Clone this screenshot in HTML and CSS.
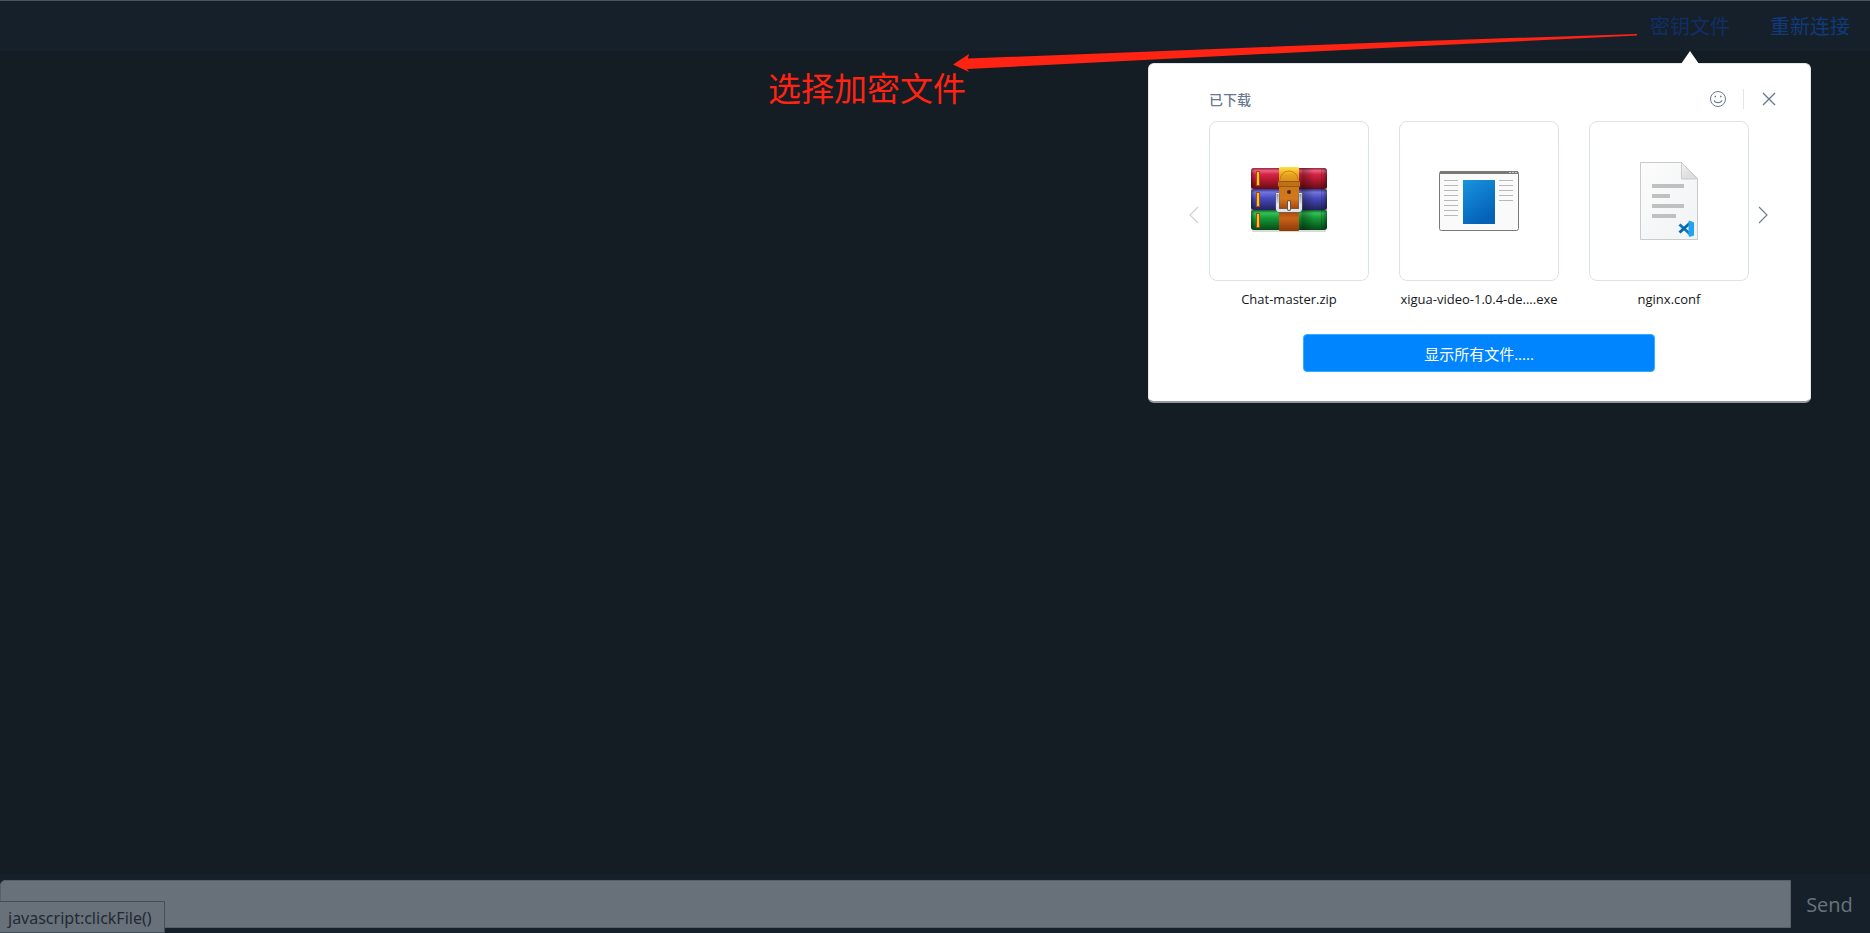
FILE: index.html
```html
<!DOCTYPE html>
<html lang="zh-CN">
<head>
<meta charset="utf-8">
<title>Chat</title>
<link rel="stylesheet" href="styles.css">
</head>
<body>
<header class="topbar">
  <nav class="links">
    <div class="menu">
      <a class="link key" href="#files">密钥文件</a>
      <section class="popup" id="files">
        <div class="popup-head">
          <h2 class="popup-title">已下载</h2>
          <div class="tools">
            <button class="icon-btn" type="button" aria-label="反馈">
              <svg width="18" height="18" viewBox="0 0 18 18" fill="none" stroke="#68798e"><circle cx="9" cy="9" r="7.500"/><path d="M5.200 10.300a3.900 3 0 0 0 7.600 0" stroke-width="1.200"/><path d="M5.500 6.500h1.500M11 6.500h1.500" stroke-width="1.500"/></svg>
            </button>
            <span class="divider"></span>
            <button class="icon-btn" type="button" aria-label="关闭">
              <svg width="18" height="18" viewBox="0 0 18 18" fill="none" stroke="#68798e" stroke-width="1.400"><path d="M3 3l12 12M15 3L3 15"/></svg>
            </button>
          </div>
        </div>
        <div class="carousel">
          <button class="arrow prev" type="button" aria-label="上一页" disabled>
            <svg width="10" height="18" viewBox="0 0 10 18" fill="none" stroke="#cbd0d5" stroke-width="1.100"><path d="M9 1L1 9l8 8"/></svg>
          </button>
          <ul class="files">
            <li class="file">
              <div class="thumb">
                <svg width="78" height="70" viewBox="0 1 78 70">
                  <defs>
                    <linearGradient id="red" x2="0" y2="1"><stop offset="0" stop-color="#9f2037"/><stop offset=".13" stop-color="#e46483"/><stop offset=".3" stop-color="#d82444"/><stop offset=".65" stop-color="#a51629"/><stop offset="1" stop-color="#650c17"/></linearGradient>
                    <linearGradient id="blue" x2="0" y2="1"><stop offset="0" stop-color="#303184"/><stop offset=".15" stop-color="#7375df"/><stop offset=".45" stop-color="#4649bb"/><stop offset="1" stop-color="#23235f"/></linearGradient>
                    <linearGradient id="green" x2="0" y2="1"><stop offset="0" stop-color="#096422"/><stop offset=".15" stop-color="#38bf5b"/><stop offset=".4" stop-color="#149b36"/><stop offset="1" stop-color="#08491a"/></linearGradient>
                    <linearGradient id="strap" x2="0" y2="1"><stop offset="0" stop-color="#ffe343"/><stop offset=".12" stop-color="#e8a420"/><stop offset=".32" stop-color="#c87818"/><stop offset=".5" stop-color="#d4771a"/><stop offset=".67" stop-color="#9c4110"/><stop offset=".8" stop-color="#c96316"/><stop offset="1" stop-color="#8c390c"/></linearGradient>
                    <linearGradient id="buckle" x2="0" y2="1"><stop stop-color="#8292a4"/><stop offset=".6" stop-color="#bdc6d0"/><stop offset="1" stop-color="#f4f7fa"/></linearGradient>
                    <linearGradient id="edge"><stop stop-color="#000" stop-opacity=".4"/><stop offset=".05" stop-opacity="0"/><stop offset=".62" stop-opacity="0"/><stop offset=".68" stop-opacity=".3"/><stop offset=".83" stop-opacity="0"/><stop offset=".93" stop-opacity="0"/><stop offset="1" stop-opacity=".4"/></linearGradient>
                  </defs>
                  <rect x="2" y="65" width="74" height="2" rx="1" fill="#1f3b1d" opacity=".18"/>
                  <rect x="1" y="3" width="76" height="21" rx="3" fill="url(#red)"/>
                  <rect x="1" y="24" width="76" height="21" rx="3" fill="url(#blue)"/>
                  <rect x="1" y="45" width="76" height="20" rx="3" fill="url(#green)"/>
                  <rect x="1" y="3" width="76" height="62" rx="3" fill="url(#edge)"/>
                  <path d="M8 6v15M8 27v15M8 48v15" stroke="#a34a10" stroke-width="4"/>
                  <path d="M8 7v13M8 28v13M8 49v13" stroke="#f3c32a" stroke-width="2"/>
                  <path d="M71.500 4v60" stroke="#000" opacity=".2"/>
                  <rect x="29" y="2" width="20" height="64" rx="1" fill="url(#strap)"/>
                  <path d="M30 15a9 9 0 0 1 18 0" fill="none" stroke="#b87517" opacity=".8"/>
                  <rect x="28" y="16" width="22" height="6" rx="1" fill="#c07019"/>
                  <path d="M28 16.500h22M28 21.500h22" stroke="#92500f" opacity=".8"/>
                  <circle cx="39" cy="27" r="2" fill="#572508"/>
                  <path d="M29 29.500h-1.500v14q0 2 2 2h19q2 0 2-2v-14H49" fill="none" stroke="#5b6571" stroke-width="4"/>
                  <path d="M29 29.500h-1.500v14q0 2 2 2h19q2 0 2-2v-14H49" fill="none" stroke="#dfe4e9" stroke-width="3"/>
                  <path d="M27.500 29v12M50.500 29v12" stroke="url(#buckle)" stroke-width="2"/>
                  <path d="M39 37v7" stroke="#655043" stroke-width="4" stroke-linecap="round"/><path d="M39 37v7" stroke="#e8edf2" stroke-width="2" stroke-linecap="round"/>
                </svg>
              </div>
              <span class="name">Chat-master.zip</span>
            </li>
            <li class="file">
              <div class="thumb">
                <svg width="80" height="60" viewBox="0 0 80 60">
                  <defs><linearGradient id="panel" x2=".5" y2="1"><stop stop-color="#1994df"/><stop offset="1" stop-color="#0461b7"/></linearGradient></defs>
                  <rect x=".5" y=".5" width="79" height="59" rx="2" fill="#fafafa" stroke="#797976"/>
                  <path d="M1 1.500h78" stroke="#797976" stroke-width="3"/>
                  <path d="M70 1.500h2M73 1.500h2M76 1.500h2" stroke="#ccc"/>
                  <rect x="24" y="9" width="32" height="44" fill="url(#panel)"/>
                  <path d="M5 9.500h14M5 14.500h14M5 19.500h14M5 24.500h14M5 29.500h14M5 34.500h14M5 39.500h14M5 44.500h14M60 9.500h14M60 14.500h14M60 19.500h14M60 24.500h14M60 29.500h14" stroke="#b8b8b8"/>
                </svg>
              </div>
              <span class="name">xigua-video-1.0.4-de....exe</span>
            </li>
            <li class="file">
              <div class="thumb">
                <svg width="58" height="78" viewBox="0 0 58 78">
                  <defs><linearGradient id="page" x2="1" y2="1"><stop stop-color="#fcfcfc"/><stop offset="1" stop-color="#f0f2f4"/></linearGradient><linearGradient id="fold" x2="1" y2="1"><stop stop-color="#f4f4f4"/><stop offset=".6" stop-color="#dedede"/></linearGradient></defs>
                  <path d="M.5.5h41l16 16v61H.5z" fill="url(#page)" stroke="#c9cccd"/>
                  <path d="M41.500.5v16.500h16z" fill="url(#fold)" stroke="#c9cccd"/>
                  <path d="M12 24h32M12 34h18M12 44h32M12 54h24" stroke="#bfc1c0" stroke-width="4"/>
                  <path d="M39.500 62.500L50 72" stroke="#087bc0" stroke-width="3"/>
                  <path d="M39.500 70.500L50 61" stroke="#0a67ad" stroke-width="3"/>
                  <path d="M49.500 58.500l4.500 2v13l-4.500 1.500-1-1.500v-14z" fill="#23a3ee"/>
                </svg>
              </div>
              <span class="name">nginx.conf</span>
            </li>
          </ul>
          <button class="arrow next" type="button" aria-label="下一页">
            <svg width="10" height="18" viewBox="0 0 10 18" fill="none" stroke="#68798e" stroke-width="1.100"><path d="M1 1l8 8-8 8"/></svg>
          </button>
        </div>
        <button class="show-all" type="button">显示所有文件.....</button>
      </section>
    </div>
    <a class="link" href="#reconnect">重新连接</a>
  </nav>
</header>
<main class="messages"></main>
<form class="composer">
  <input class="message" type="text" aria-label="Message">
  <button class="send" type="button">Send</button>
</form>
<div class="status">javascript:clickFile()</div>
<div class="note">
  <svg class="note-arrow" width="686" height="40" viewBox="0 0 686 40" fill="#ff2313"><path d="M1 30.500L17 20l-1 4.500L470 7 685 0v1.500L470 12 15 35l2 3z"/></svg>
  <span class="note-text">选择加密文件</span>
</div>
</body>
</html>
```
FILE: styles.css
```css
* { box-sizing: border-box; }

body {
  margin: 0;
  min-height: 100vh;
  display: flex;
  flex-direction: column;
  background: #141c24;
  color: #14171c;
  font-family: "Open Sans", "Noto Sans CJK SC", sans-serif;
}

button {
  padding: 0;
  border: 0;
  background: none;
  font-family: inherit;
}

svg { display: block; }

.topbar {
  height: 51px;
  border-top: 1px solid #47565f;
  background: #16202a;
}

.links {
  display: flex;
  justify-content: flex-end;
  gap: 40px;
  padding-right: 20px;
}

.menu { position: relative; }

.link {
  display: block;
  color: #103a7b;
  font-family: "Noto Sans CJK SC", sans-serif;
  font-size: 20px;
  line-height: 50px;
  text-decoration: none;
}

.key { color: #122f65; }

.popup {
  position: absolute;
  top: 62px;
  right: -81px;
  width: 663px;
  padding: 20px 61px 29px 60px;
  border: 1px solid #dfe6ec;
  border-bottom: 2px solid #9299a1;
  border-radius: 6px;
  background: #fff;
}

.popup::before {
  content: "";
  position: absolute;
  top: -13px;
  right: 111px;
  border: 9px solid transparent;
  border-top: 0;
  border-bottom: 13px solid #fff;
}

.popup-head {
  display: flex;
  align-items: center;
  justify-content: space-between;
  height: 30px;
  margin-right: -29px;
}

.popup-title {
  margin: 0;
  color: #68798e;
  font-family: "Noto Sans CJK SC", sans-serif;
  font-size: 14px;
  font-weight: 500;
  line-height: 20px;
}

.tools {
  display: flex;
  align-items: center;
  gap: 16px;
}

.divider {
  width: 1px;
  height: 20px;
  background: #e1e4e8;
}

.carousel {
  position: relative;
  margin-top: 7px;
}

.arrow {
  position: absolute;
  top: 85px;
}

.prev { left: -20px; }
.next { right: -19px; }

.files {
  display: grid;
  grid-template-columns: repeat(3, 160px);
  gap: 30px;
  margin: 0;
  padding: 0;
  list-style: none;
}

.file { text-align: center; }

.thumb {
  display: grid;
  place-items: center;
  height: 160px;
  border: 1px solid #dbe3ea;
  border-radius: 8px;
}

.name {
  display: block;
  margin-top: 8px;
  font-size: 13px;
  line-height: 20px;
  white-space: nowrap;
}

.show-all {
  display: block;
  width: 352px;
  height: 38px;
  margin: 25px auto 0;
  border: 1px solid #35adff;
  border-radius: 4px;
  background: #0085ff;
  color: #fff;
  font-size: 15px;
}

.messages { flex: 1; }

.composer {
  display: flex;
  padding: 6px 0 5px;
  background: #16202a;
}

.message {
  flex: 1;
  height: 48px;
  padding: 0 10px;
  border: 1px solid #56616a;
  border-radius: 5px 0 0 5px;
  background: #68707a;
  font-size: 20px;
}

.send {
  width: 79px;
  padding-right: 2px;
  color: #68737c;
  font-size: 20px;
}

.status {
  position: fixed;
  left: 0;
  bottom: 0;
  height: 32px;
  padding: 0 12px 0 8px;
  border: 1px solid #434e59;
  border-left: 0;
  background: #68707a;
  color: #202a35;
  font-family: "Noto Sans", sans-serif;
  font-size: 16px;
  line-height: 32px;
}

.note {
  position: absolute;
  top: 34px;
  left: 768px;
  display: flex;
  flex-direction: column;
}

.note-arrow { margin-left: 184px; }

.note-text {
  margin-top: -11px;
  color: #ff2313;
  font-family: "Noto Sans CJK SC", sans-serif;
  font-size: 33px;
  line-height: 48px;
}
```
